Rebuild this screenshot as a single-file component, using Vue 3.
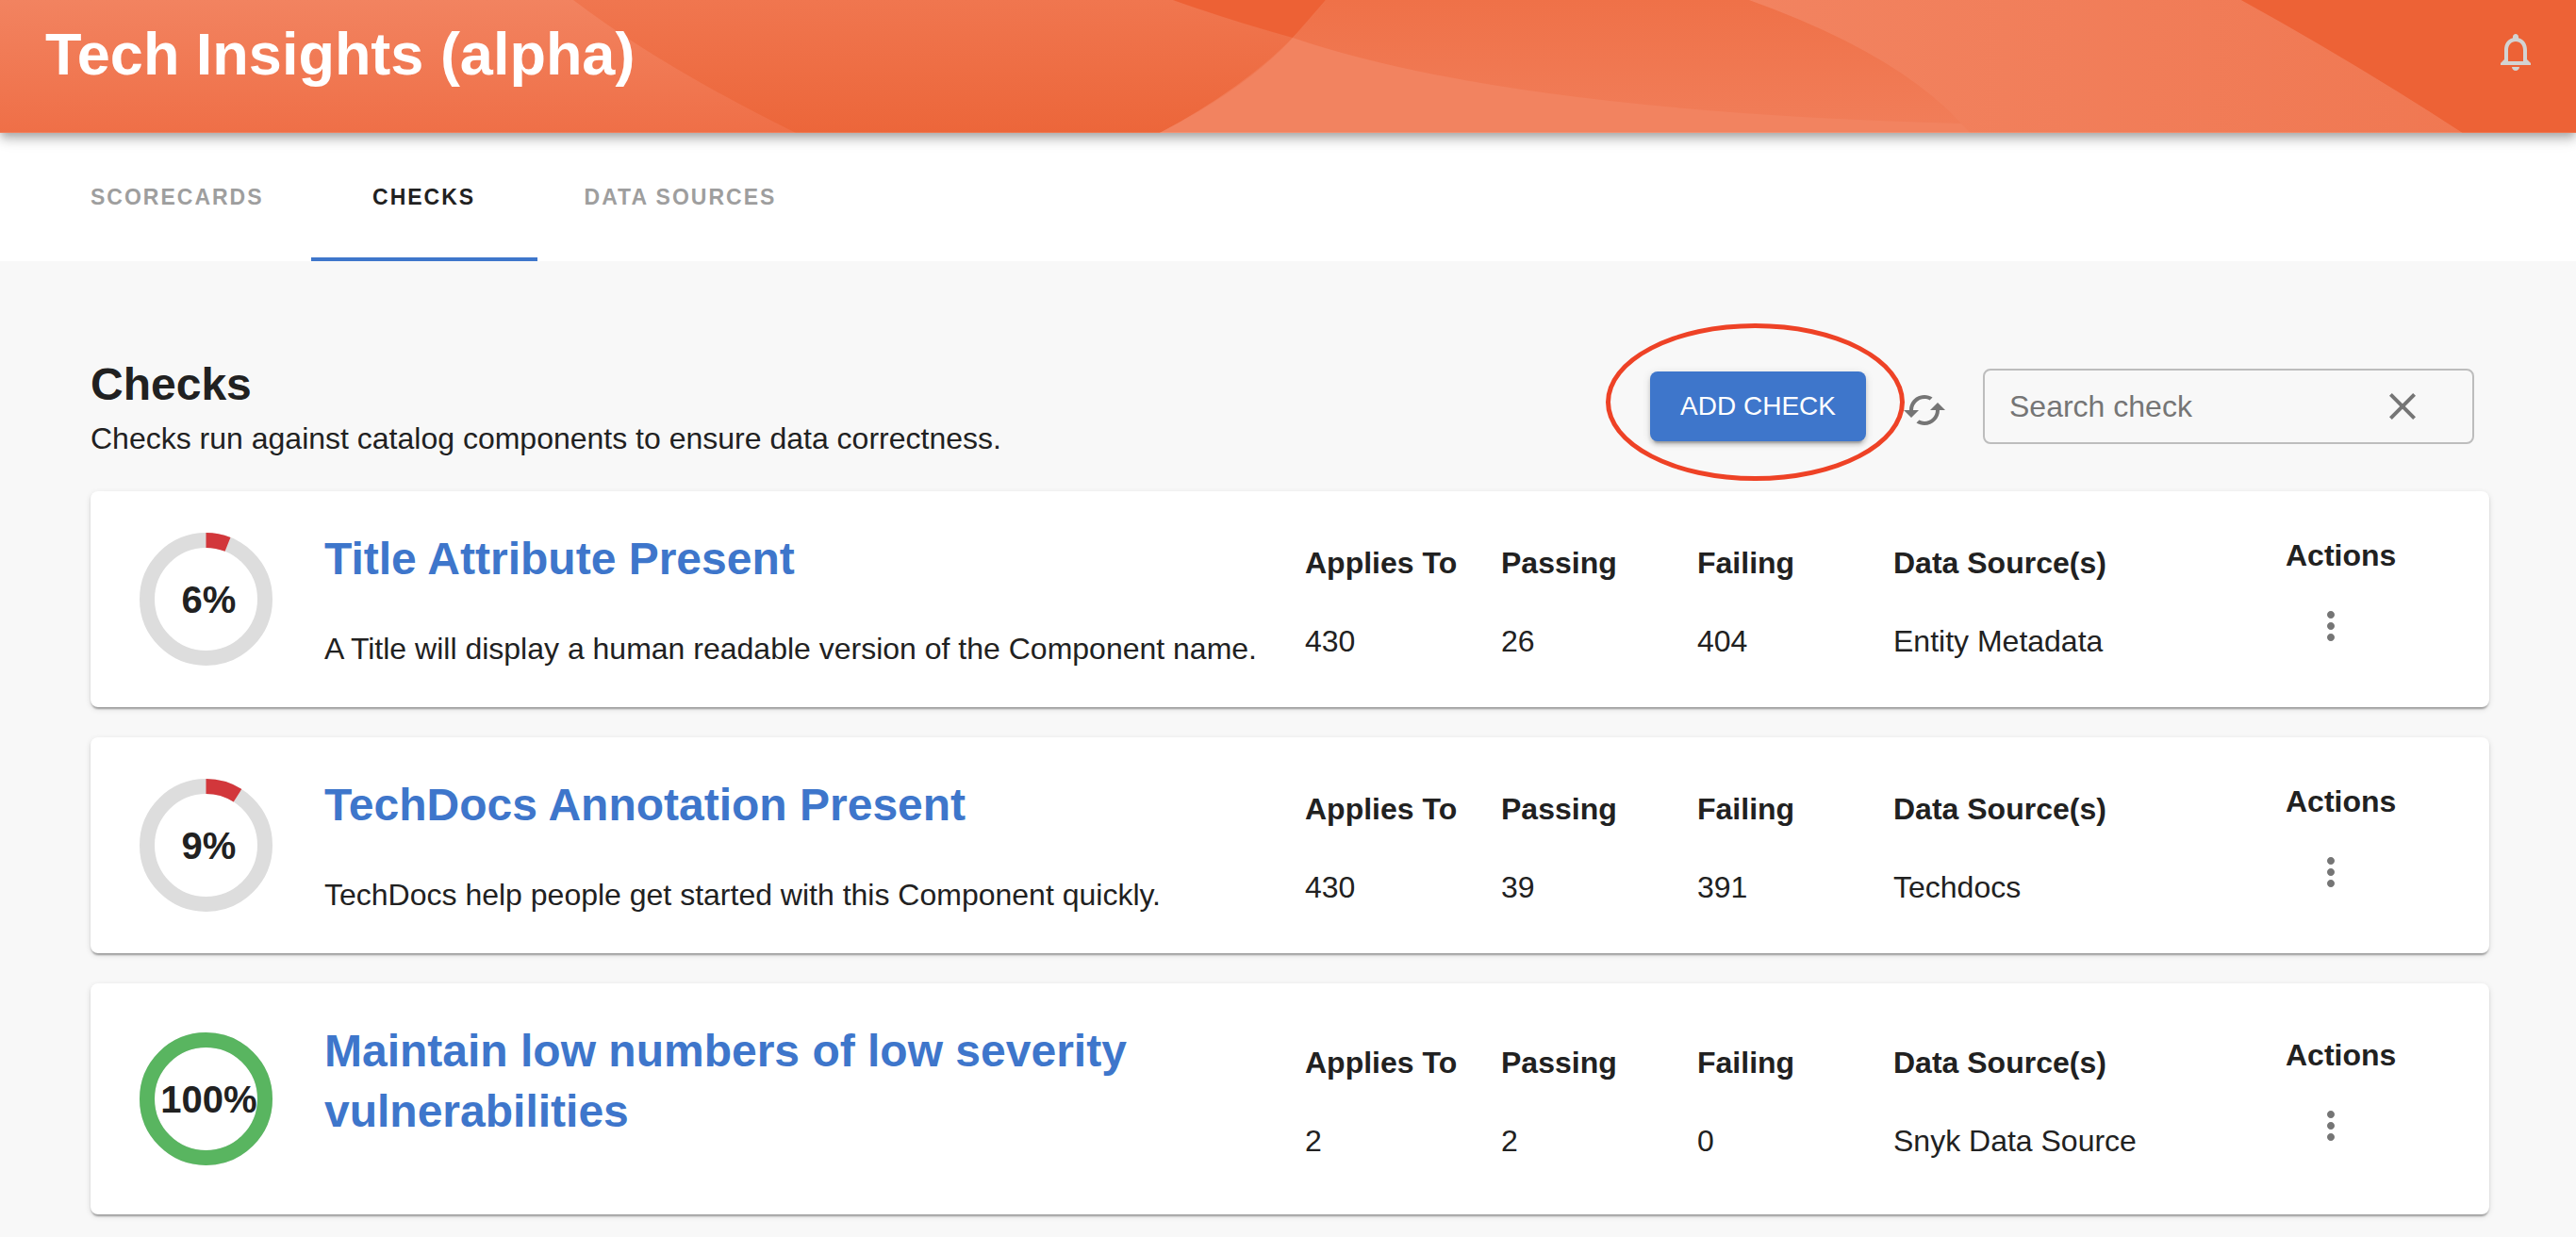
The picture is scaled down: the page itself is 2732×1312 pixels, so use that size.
<script setup>
import { ref } from 'vue'

const tabs = ['Scorecards', 'Checks', 'Data Sources']
const activeTab = ref('Checks')
const query = ref('')

const checks = [
  {
    title: 'Title Attribute Present',
    description: 'A Title will display a human readable version of the Component name.',
    percent: 6,
    applies: 430,
    passing: 26,
    failing: 404,
    source: 'Entity Metadata'
  },
  {
    title: 'TechDocs Annotation Present',
    description: 'TechDocs help people get started with this Component quickly.',
    percent: 9,
    applies: 430,
    passing: 39,
    failing: 391,
    source: 'Techdocs'
  },
  {
    title: 'Maintain low numbers of low severity vulnerabilities',
    description: '',
    percent: 100,
    applies: 2,
    passing: 2,
    failing: 0,
    source: 'Snyk Data Source'
  }
]
</script>

<template>
  <div class="page">
    <header class="banner">
      <svg class="waves" viewBox="0 0 2732 141" preserveAspectRatio="none" aria-hidden="true">
        <defs>
          <linearGradient id="base" x1="0" y1="0" x2="0" y2="1">
            <stop offset="0" stop-color="#f0764f" />
            <stop offset="1" stop-color="#ec663a" />
          </linearGradient>
          <linearGradient id="left" x1="0" y1="0" x2="0" y2="1">
            <stop offset="0" stop-color="#f28360" />
            <stop offset="1" stop-color="#ef6f47" />
          </linearGradient>
          <linearGradient id="middle" x1="0" y1="0" x2="0" y2="1">
            <stop offset="0" stop-color="#ef7148" />
            <stop offset="1" stop-color="#f17e5a" />
          </linearGradient>
          <linearGradient id="right" x1="0" y1="0" x2="1" y2="0">
            <stop offset="0" stop-color="#f28360" />
            <stop offset="1" stop-color="#f07852" />
          </linearGradient>
        </defs>
        <rect width="2732" height="141" fill="url(#base)" />
        <path d="M0 0H608Q700 70 844 141H0Z" fill="url(#left)" />
        <path d="M1244 0H1406L1371 40Q1305 22 1244 0Z" fill="#ed6135" />
        <path d="M1406 0H2400V141H1230Q1345 80 1406 0Z" fill="url(#middle)" />
        <path d="M1371 40Q1600 118 2082 131L2320 141H1230Q1320 95 1371 40Z" fill="#f28360" />
        <path d="M1855 0H2377Q2490 62 2612 141H2089Q2022 60 1855 0Z" fill="url(#right)" />
        <path d="M2377 0H2732V141H2612Q2500 68 2377 0Z" fill="#ed6236" />
        <rect y="140" width="2732" height="1" fill="#fff" fill-opacity="0.12" />
      </svg>
      <h1>Tech Insights (alpha)</h1>
      <button class="icon-button bell" type="button" aria-label="Notifications">
        <svg viewBox="0 0 24 24">
          <path d="M12 22c1.1 0 2-.9 2-2h-4c0 1.1.9 2 2 2zm6-6v-5c0-3.07-1.63-5.64-4.5-6.32V4c0-.83-.67-1.5-1.5-1.5s-1.5.67-1.5 1.5v.68C7.64 5.36 6 7.92 6 11v5l-2 2v1h16v-1l-2-2zm-2 1H8v-6c0-2.48 1.51-4.5 4-4.5s4 2.02 4 4.5v6z" />
        </svg>
      </button>
    </header>

    <nav class="tabs" aria-label="Sections">
      <button
        v-for="tab in tabs"
        :key="tab"
        type="button"
        class="tab"
        :class="{ active: tab === activeTab }"
        @click="activeTab = tab"
      >
        {{ tab }}
      </button>
    </nav>

    <main class="content">
      <div class="heading">
        <div>
          <h2>Checks</h2>
          <p>Checks run against catalog components to ensure data correctness.</p>
        </div>
        <div class="toolbar">
          <div class="highlight">
            <button class="add" type="button">ADD CHECK</button>
            <span class="ring"></span>
          </div>
          <button class="icon-button refresh" type="button" aria-label="Refresh">
            <svg viewBox="0 0 24 24">
              <path d="M19 8l-4 4h3c0 3.31-2.69 6-6 6-1.01 0-1.97-.25-2.8-.7l-1.46 1.46C8.97 19.54 10.43 20 12 20c4.42 0 8-3.58 8-8h3l-4-4zM6 12c0-3.31 2.69-6 6-6 1.01 0 1.97.25 2.8.7l1.46-1.46C15.03 4.46 13.57 4 12 4c-4.42 0-8 3.58-8 8H1l4 4 4-4H6z" />
            </svg>
          </button>
          <div class="search">
            <input v-model="query" type="text" placeholder="Search check" aria-label="Search check" />
            <button class="icon-button" type="button" aria-label="Clear search" @click="query = ''">
              <svg viewBox="0 0 24 24">
                <path d="M19 6.41L17.59 5 12 10.59 6.41 5 5 6.41 10.59 12 5 17.59 6.41 19 12 13.41 17.59 19 19 17.59 13.41 12z" />
              </svg>
            </button>
          </div>
        </div>
      </div>

      <div class="cards">
        <article v-for="check in checks" :key="check.title" class="card">
          <div class="gauge-cell">
            <div class="gauge">
              <svg viewBox="0 0 141 141" aria-hidden="true">
                <circle class="track" cx="70.5" cy="70.5" r="62.5" />
                <circle
                  class="arc"
                  :class="{ full: check.percent === 100 }"
                  cx="70.5"
                  cy="70.5"
                  r="62.5"
                  pathLength="100"
                  :stroke-dasharray="`${check.percent} ${100 - check.percent}`"
                  transform="rotate(-90 70.5 70.5)"
                />
              </svg>
              <span>{{ check.percent }}%</span>
            </div>
          </div>
          <div class="summary">
            <h3><a href="#">{{ check.title }}</a></h3>
            <p>{{ check.description }}</p>
          </div>
          <dl class="stats">
            <div>
              <dt>Applies To</dt>
              <dd>{{ check.applies }}</dd>
            </div>
            <div>
              <dt>Passing</dt>
              <dd>{{ check.passing }}</dd>
            </div>
            <div>
              <dt>Failing</dt>
              <dd>{{ check.failing }}</dd>
            </div>
            <div class="wide">
              <dt>Data Source(s)</dt>
              <dd>{{ check.source }}</dd>
            </div>
          </dl>
          <div class="actions">
            <strong>Actions</strong>
            <button class="icon-button" type="button" :aria-label="`Actions for ${check.title}`">
              <svg viewBox="0 0 24 24">
                <path d="M12 8c1.1 0 2-.9 2-2s-.9-2-2-2-2 .9-2 2 .9 2 2 2zm0 2c-1.1 0-2 .9-2 2s.9 2 2 2 2-.9 2-2-.9-2-2-2zm0 6c-1.1 0-2 .9-2 2s.9 2 2 2 2-.9 2-2-.9-2-2-2z" />
              </svg>
            </button>
          </div>
        </article>
      </div>
    </main>
  </div>
</template>

<style>
body {
  margin: 0;
  background: #f8f8f8;
}
</style>

<style scoped>
.page {
  font-family: "Liberation Sans", Arial, sans-serif;
  font-size: 32px;
  line-height: 48px;
  color: #212121;
}

h1,
h2,
h3,
p,
dl,
dd {
  margin: 0;
}

button,
input {
  font-family: inherit;
  border: 0;
  background: none;
}

button {
  cursor: pointer;
}

.icon-button {
  display: flex;
  padding: 0;
  color: #757575;
}

.icon-button svg {
  width: 48px;
  height: 48px;
  fill: currentColor;
}

.banner {
  position: relative;
  display: flex;
  justify-content: space-between;
  align-items: flex-start;
  padding: 21px 40px 48px 48px;
  box-shadow:
    0 4px 8px -2px rgba(0, 0, 0, 0.2),
    0 8px 10px 0 rgba(0, 0, 0, 0.14),
    0 2px 20px 0 rgba(0, 0, 0, 0.12);
}

.waves {
  position: absolute;
  inset: 0;
  width: 100%;
  height: 100%;
}

h1 {
  position: relative;
  font-size: 63px;
  line-height: 72px;
  color: #fff;
}

.bell {
  position: relative;
  margin-top: 10px;
  color: #d3d3d3;
}

.tabs {
  display: flex;
  padding-left: 46px;
  background: #fff;
}

.tab {
  min-width: 240px;
  height: 136px;
  padding: 4px 50px 0;
  border-bottom: 4px solid transparent;
  font-size: 23px;
  font-weight: 700;
  letter-spacing: 2px;
  text-transform: uppercase;
  color: #9e9e9e;
}

.tab.active {
  border-bottom-color: #3e76cb;
  color: #212121;
}

.content {
  padding: 101px 92px 24px 96px;
}

.heading {
  display: flex;
  justify-content: space-between;
  align-items: flex-start;
  margin-bottom: 29px;
}

h2 {
  font-size: 48px;
  line-height: 60px;
}

.heading p {
  line-height: 54px;
}

.toolbar {
  display: flex;
  align-items: center;
  gap: 38px;
  padding: 13px 16px 0 0;
}

.highlight {
  position: relative;
}

.add {
  display: block;
  padding: 12px 32px;
  border-radius: 8px;
  background: #3e76cb;
  box-shadow:
    0 6px 2px -4px rgba(0, 0, 0, 0.2),
    0 4px 4px 0 rgba(0, 0, 0, 0.14),
    0 2px 10px 0 rgba(0, 0, 0, 0.12);
  font-size: 28px;
  line-height: 50px;
  color: #fff;
}

.ring {
  position: absolute;
  inset: -51px -41px -42px -47px;
  border: 5px solid #ee4226;
  border-radius: 50%;
  pointer-events: none;
}

.refresh {
  position: relative;
  margin-top: 8px;
}

.search {
  display: flex;
  align-items: center;
  box-sizing: border-box;
  width: 521px;
  height: 80px;
  padding: 0 50px 0 26px;
  border: 2px solid #bdbdbd;
  border-radius: 8px;
}

.search input {
  flex: 1;
  min-width: 0;
  padding: 0;
  font-size: 32px;
  color: #212121;
  outline: none;
}

.search input::placeholder {
  color: #757575;
  opacity: 1;
}

.cards {
  display: flex;
  flex-direction: column;
  gap: 32px;
}

.card {
  display: grid;
  grid-template-columns: repeat(12, 1fr);
  align-items: center;
  padding: 0 24px;
  border-radius: 8px;
  background: #fff;
  box-shadow:
    0 4px 2px -2px rgba(0, 0, 0, 0.2),
    0 2px 2px 0 rgba(0, 0, 0, 0.14),
    0 2px 6px 0 rgba(0, 0, 0, 0.12);
}

.gauge-cell {
  padding-left: 28px;
}

.gauge {
  display: grid;
  width: 141px;
  height: 141px;
  place-items: center;
}

.gauge > * {
  grid-area: 1 / 1;
}

.gauge svg {
  width: 100%;
  height: 100%;
}

.gauge circle {
  fill: none;
  stroke-width: 16;
}

.track {
  stroke: #ddd;
}

.arc {
  stroke: #d2373b;
}

.arc.full {
  stroke: #59b560;
}

.gauge span {
  padding-left: 6px;
  font-size: 40px;
  font-weight: 700;
}

.summary {
  grid-column: span 5;
  display: flex;
  flex-direction: column;
  gap: 39px;
  padding: 40px 16px 38px;
}

h3 {
  font-size: 48px;
  line-height: 64px;
}

h3 a {
  color: #3e76cb;
  text-decoration: none;
}

.stats {
  grid-column: span 5;
  display: grid;
  grid-template-columns: repeat(5, 1fr);
  padding-top: 6px;
}

.stats > div {
  display: flex;
  flex-direction: column;
  gap: 35px;
  padding-left: 16px;
}

.stats .wide {
  grid-column: span 2;
}

dt {
  font-weight: 700;
}

.actions {
  display: flex;
  flex-direction: column;
  align-items: flex-start;
  gap: 3px;
  padding: 6px 0 0 16px;
}

.actions .icon-button {
  padding: 24px;
}
</style>
